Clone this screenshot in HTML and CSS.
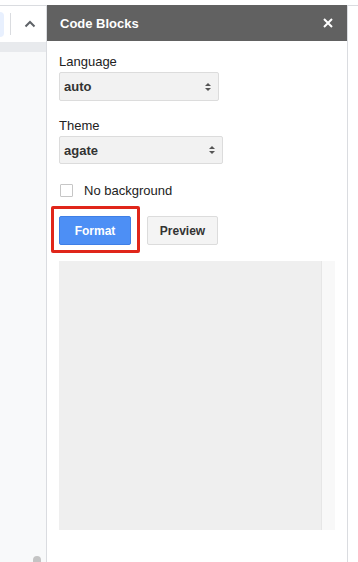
FILE: index.html
```html
<!DOCTYPE html>
<html lang="en">
<head>
    <meta charset="UTF-8">
    <meta name="viewport" content="width=device-width, initial-scale=1.0">
    <title>Code Blocks</title>
    <link rel="stylesheet" href="styles.css">
</head>
<body>
    <div class="doc">
        <div class="toolbar">
            <span class="chip"></span>
            <span class="sep"></span>
            <svg class="chevron" width="12" height="8" viewBox="0 0 12 8">
                <path d="M1.5 6.5 L6 2 L10.5 6.5" fill="none" stroke="#5f6368" stroke-width="2"/>
            </svg>
        </div>
        <div class="band"></div>
        <div class="page">
            <span class="thumb"></span>
        </div>
    </div>
    <div class="panel">
        <div class="panel-header">
            <span class="title">Code Blocks</span>
            <svg class="close" width="10" height="10" viewBox="0 0 10 10">
                <path d="M1 1 L9 9 M9 1 L1 9" stroke="#fff" stroke-width="2"/>
            </svg>
        </div>
        <div class="panel-body">
            <label class="field-label">Language</label>
            <div class="select select-lang">
                <span>auto</span>
                <span class="arrows"><i class="up"></i><i class="down"></i></span>
            </div>
            <label class="field-label">Theme</label>
            <div class="select select-theme">
                <span>agate</span>
                <span class="arrows"><i class="up"></i><i class="down"></i></span>
            </div>
            <div class="check-row">
                <span class="checkbox"></span>
                <span>No background</span>
            </div>
            <div class="buttons">
                <span class="highlight">
                    <button class="btn btn-blue">Format</button>
                </span>
                <button class="btn">Preview</button>
            </div>
            <div class="code-area">
                <div class="code"></div>
                <div class="track"></div>
            </div>
        </div>
    </div>
    <div class="side"></div>
</body>
</html>
```

FILE: styles.css
```css
html, body {
    height: 100%;
}
body {
    margin: 0;
    padding-top: 5px;
    box-sizing: border-box;
    display: flex;
    font-family: "Liberation Sans", Arial, sans-serif;
    background: #fff;
    overflow: hidden;
}
.doc {
    width: 46px;
    flex: none;
    display: flex;
    flex-direction: column;
    border-top: 1px solid #dadce0;
}
.toolbar {
    height: 36px;
    background: #fff;
    display: flex;
    align-items: center;
}
.chip {
    width: 4px;
    height: 25px;
    background: #e8f0fe;
    border-radius: 0 6px 6px 0;
}
.sep {
    width: 1px;
    height: 22px;
    background: #dadce0;
    margin-left: 6px;
}
.chevron {
    margin-left: 13px;
}
.band {
    height: 10px;
    background: #e8eaed;
}
.page {
    flex: 1;
    background: #f8f9fa;
    position: relative;
}
.thumb {
    position: absolute;
    left: 33px;
    bottom: -4px;
    width: 8px;
    height: 10px;
    border-radius: 4px;
    background: #c4c4c4;
}
.panel {
    width: 300px;
    flex: none;
    border-left: 1px solid #dadce0;
    border-right: 1px solid #dadce0;
}
.panel-header {
    height: 36px;
    background: #616161;
    color: #fff;
    display: flex;
    align-items: center;
    justify-content: space-between;
    padding: 0 14px 0 13px;
}
.title {
    font-weight: bold;
    font-size: 13px;
}
.panel-body {
    padding: 13px 12px 0 12px;
}
.field-label {
    display: block;
    font-size: 13px;
    line-height: 15px;
    color: #222;
    margin-bottom: 3px;
}
.select {
    height: 29px;
    box-sizing: border-box;
    border: 1px solid #dcdcdc;
    border-radius: 2px;
    background: #f2f2f2;
    display: flex;
    align-items: center;
    justify-content: space-between;
    padding: 0 7px 0 4px;
    font-size: 13px;
    font-weight: bold;
    color: #333;
    margin-bottom: 17px;
}
.select-lang {
    width: 160px;
}
.select-theme {
    width: 164px;
    height: 28px;
    margin-bottom: 19px;
}
.arrows {
    display: flex;
    flex-direction: column;
    gap: 2px;
}
.arrows i {
    width: 0;
    height: 0;
    border-left: 3.5px solid transparent;
    border-right: 3.5px solid transparent;
}
.arrows .up {
    border-bottom: 3.5px solid #555;
}
.arrows .down {
    border-top: 3.5px solid #555;
}
.check-row {
    display: flex;
    align-items: center;
    font-size: 13px;
    color: #222;
    height: 14px;
}
.checkbox {
    width: 11px;
    height: 11px;
    border: 1px solid #c6c6c6;
    border-radius: 1px;
    margin: 0 11px 0 1px;
}
.buttons {
    display: flex;
    gap: 16px;
    margin-top: 19px;
}
.highlight {
    position: relative;
    display: flex;
}
.highlight::after {
    content: "";
    position: absolute;
    left: -8px;
    right: -9px;
    top: -10px;
    bottom: -8px;
    border: 3px solid #e0261a;
    border-radius: 2px;
}
.btn {
    height: 29px;
    width: 71px;
    box-sizing: border-box;
    border: 1px solid #dcdcdc;
    border-radius: 2px;
    background: #f4f4f4;
    font-family: "Liberation Sans", Arial, sans-serif;
    font-weight: bold;
    font-size: 12px;
    color: #333;
    padding: 0;
}
.btn-blue {
    width: 72px;
    background: #4d8ff5;
    border-color: #3f7fe6;
    color: #fff;
}
.code-area {
    margin-top: 16px;
    width: 276px;
    height: 269px;
    display: flex;
}
.code {
    flex: 1;
    background: #efefef;
}
.track {
    width: 13px;
    background: #f8f8f8;
    border-left: 1px solid #e6e6e6;
}
.side {
    flex: 1;
    border-top: 1px solid #dadce0;
}
```
